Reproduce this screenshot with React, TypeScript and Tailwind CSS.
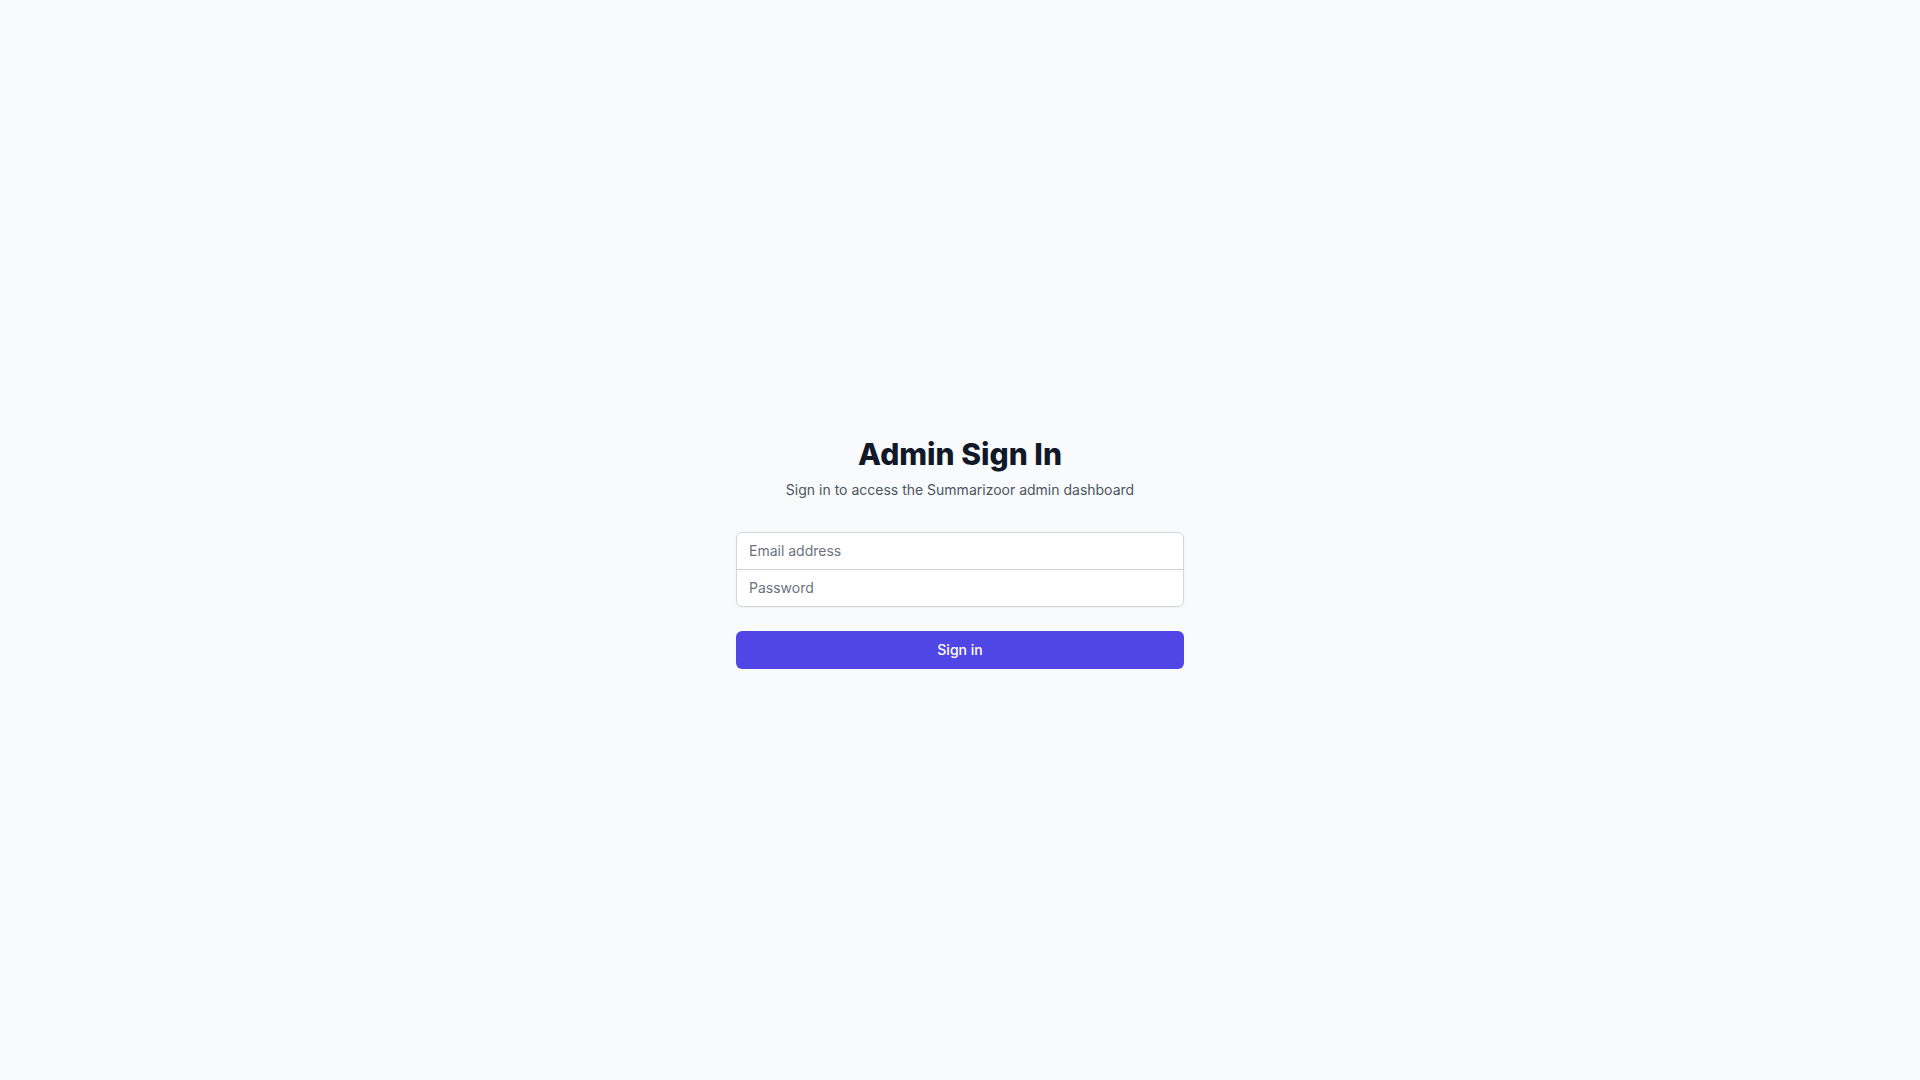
import { useState } from "react";

const App = () => {
  const [email, setEmail] = useState("");
  const [password, setPassword] = useState("");

  const handleSubmit = (e: React.FormEvent) => {
    e.preventDefault();
  };

  return (
    <div className="min-h-screen flex items-center justify-center bg-[#f9fafb] font-['Inter',sans-serif] antialiased py-12 px-4 sm:px-6 lg:px-8">
      <div className="max-w-md w-full space-y-8">
        <div>
          <h2 className="mt-6 text-center text-3xl font-extrabold text-[#111827]">
            Admin Sign In
          </h2>
          <p className="mt-2 text-center text-sm text-[#4b5563]">
            Sign in to access the Summarizoor admin dashboard
          </p>
        </div>
        <form className="mt-8 space-y-6" onSubmit={handleSubmit}>
          <div className="rounded-md shadow-xs -space-y-px">
            <div>
              <input
                id="email"
                name="email"
                type="email"
                required
                aria-label="Email address"
                className="appearance-none relative block w-full px-3 py-2 border border-[#d1d5db] bg-white placeholder-[#6b7280] text-[#111827] rounded-t-md focus:outline-none focus:border-[#6366f1] focus:z-10 text-sm"
                placeholder="Email address"
                value={email}
                onChange={(e) => setEmail(e.target.value)}
              />
            </div>
            <div>
              <input
                id="password"
                name="password"
                type="password"
                required
                aria-label="Password"
                className="appearance-none relative block w-full px-3 py-2 border border-[#d1d5db] bg-white placeholder-[#6b7280] text-[#111827] rounded-b-md focus:outline-none focus:border-[#6366f1] focus:z-10 text-sm"
                placeholder="Password"
                value={password}
                onChange={(e) => setPassword(e.target.value)}
              />
            </div>
          </div>

          <div>
            <button
              type="submit"
              className="w-full flex justify-center py-2 px-4 border border-transparent text-sm font-medium rounded-md text-white bg-[#4f46e5] hover:bg-[#4338ca]"
            >
              Sign in
            </button>
          </div>
        </form>
      </div>
    </div>
  );
};

export default App;
